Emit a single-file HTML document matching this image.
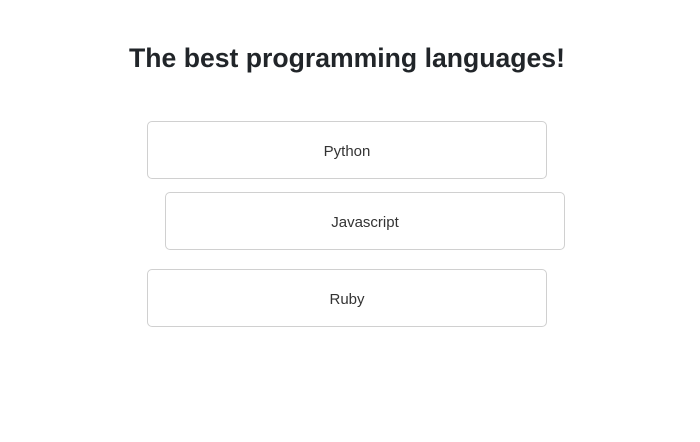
<!DOCTYPE html>
<html><head><style>
body{margin:0;width:700px;height:442px;background:#fff;font-family:"Liberation Sans",sans-serif;position:relative;overflow:hidden}
h1{position:absolute;top:41px;left:0;width:694px;margin:0;text-align:center;font-size:26.6px;font-weight:bold;color:#212529;line-height:34px}
.b{position:absolute;width:398px;height:56px;border:1px solid #d0d0d0;border-radius:5px;text-align:center;line-height:60px;font-size:15px;color:#333}
</style></head><body>
<h1>The best programming languages!</h1>
<div class="b" style="left:147px;top:121px">Python</div>
<div class="b" style="left:165px;top:192px">Javascript</div>
<div class="b" style="left:147px;top:269px">Ruby</div>
</body></html>
